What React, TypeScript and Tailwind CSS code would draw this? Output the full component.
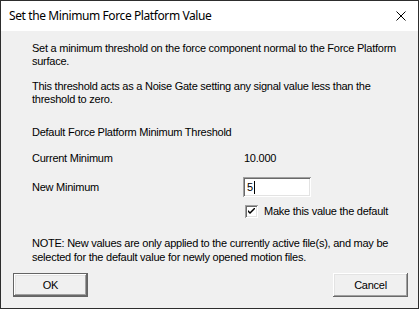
import React from "react";

const sunken =
  "shadow-[inset_1px_1px_#a0a0a0,inset_-1px_-1px_#ffffff,inset_2px_2px_#696969,inset_-2px_-2px_#e3e3e3]";
const raised =
  "shadow-[inset_-1px_-1px_#696969,inset_1px_1px_#ffffff,inset_-2px_-2px_#a0a0a0,inset_2px_2px_#e3e3e3]";

export default function App() {
  return (
    <div
      className="w-[419px] h-[309px] border border-[#2d2d2d] bg-[#f0f0f0] flex flex-col text-black overflow-hidden whitespace-nowrap"
      style={{ fontFamily: '"Liberation Sans", Arial, sans-serif' }}
    >
      <div className="h-[30px] bg-white flex items-center justify-between pl-[8px] pr-[12px] shrink-0">
        <span
          className="text-[12px] leading-[16px] text-black tracking-[-0.4px]"
          style={{ fontFamily: '"Noto Sans", "Open Sans", sans-serif' }}
        >
          Set the Minimum Force Platform Value
        </span>
        <svg width="10" height="10" viewBox="0 0 10 10" className="mt-[-1px]">
          <path d="M0.5 0.5 L9.5 9.5 M9.5 0.5 L0.5 9.5" stroke="#000" strokeWidth="1" />
        </svg>
      </div>
      <div className="flex flex-col pt-[11px] text-[11px] tracking-[-0.25px]">
        <div className="pl-[31px] pr-[10px]">
          <p className="leading-[13px]">
            Set a minimum threshold on the force component normal to the Force Platform
            <br />
            surface.
          </p>
          <p className="leading-[13px] mt-[12px]">
            This threshold acts as a Noise Gate setting any signal value less than the
            <br />
            threshold to zero.
          </p>
          <p className="leading-[13px] mt-[20px]">Default Force Platform Minimum Threshold</p>
          <div className="flex mt-[13px] leading-[13px]">
            <span className="w-[212px]">Current Minimum</span>
            <span>10.000</span>
          </div>
          <div className="flex items-center mt-[12px] h-[20px] leading-[13px]">
            <span className="w-[211px]">New Minimum</span>
            <div className={`w-[68px] h-[20px] bg-white ${sunken} flex items-center pl-[4px]`}>
              <span className="leading-[13px]">5</span>
              <span className="w-[1px] h-[13px] bg-black ml-[1px]" />
            </div>
          </div>
          <div className="flex items-center mt-[8px] h-[13px] leading-[13px]">
            <div className="w-[213px]" />
            <div className={`w-[13px] h-[13px] bg-white ${sunken} flex items-center justify-center`}>
              <svg width="7" height="7" viewBox="0 0 7 7">
                <path d="M0 2 L0 4 L2 6 L7 1 L7 -1 L2 4 Z" fill="#000" />
              </svg>
            </div>
            <span className="ml-[6px]">Make this value the default</span>
          </div>
          <p className="leading-[14px] mt-[18px]">
            NOTE: New values are only applied to the currently active file(s), and may be
            <br />
            selected for the default value for newly opened motion files.
          </p>
        </div>
        <div className="flex justify-between pl-[12px] pr-[10px] mt-[9px]">
          <button
            className={`w-[75px] h-[24px] border border-[#646464] bg-[#f0f0f0] ${raised} text-[11px] leading-[13px]`}
          >
            OK
          </button>
          <button className={`w-[75px] h-[24px] bg-[#f0f0f0] ${raised} text-[11px] leading-[13px]`}>
            Cancel
          </button>
        </div>
      </div>
    </div>
  );
}
